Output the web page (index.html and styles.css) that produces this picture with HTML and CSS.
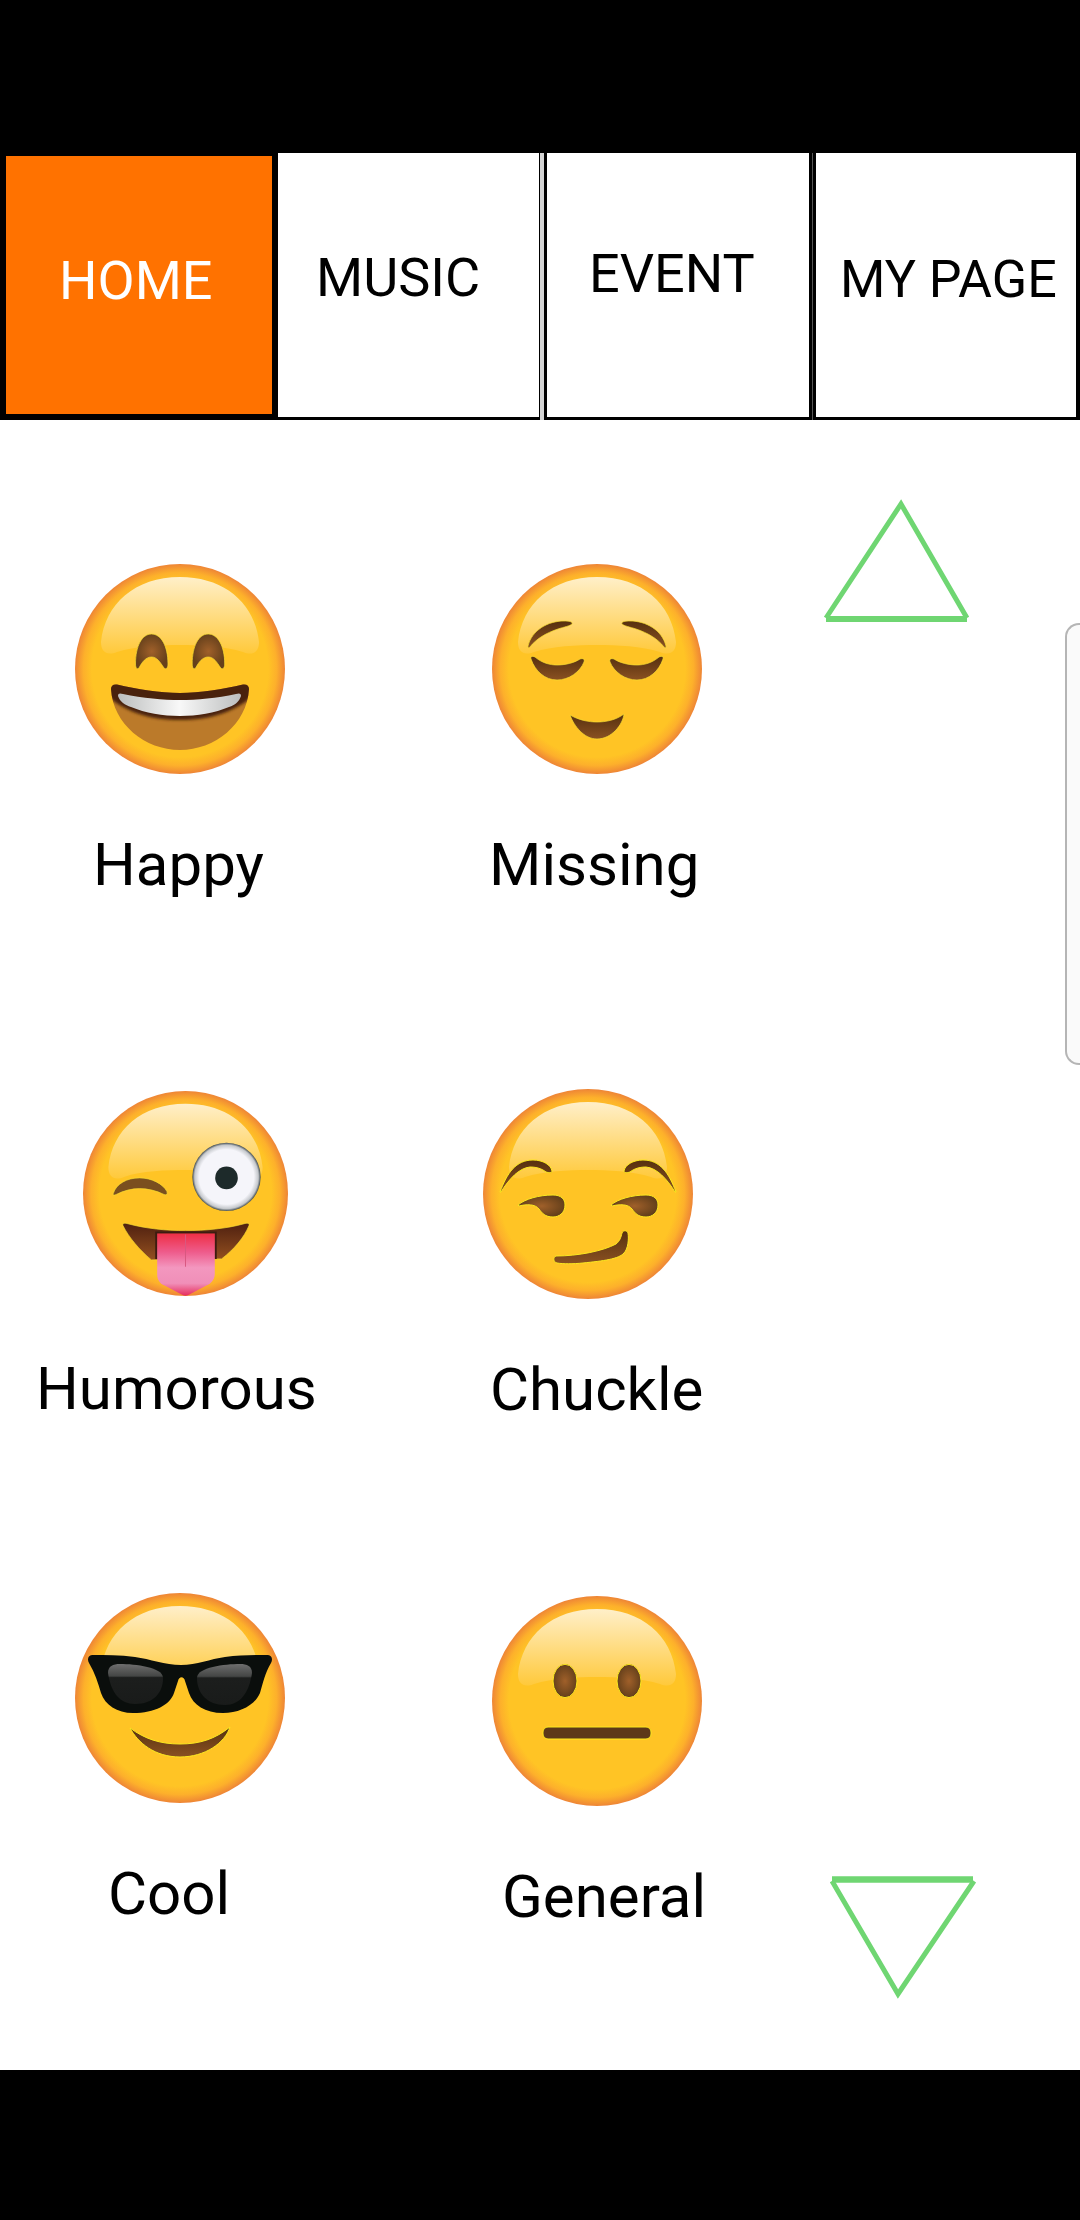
FILE: index.html
```html
<!DOCTYPE html>
<html lang="en">
<head>
    <meta charset="UTF-8">
    <title>Mood</title>
    <link rel="stylesheet" href="styles.css">
</head>
<body>
    <!-- shared face parts -->
    <svg class="defs" width="0" height="0" aria-hidden="true">
        <defs>
            <radialGradient id="skin" cx="50%" cy="50%" r="50%">
                <stop offset="0.84" stop-color="#ffc425"/>
                <stop offset="0.92" stop-color="#fdb02b"/>
                <stop offset="1" stop-color="#ee8536"/>
            </radialGradient>
            <linearGradient id="shine" gradientUnits="userSpaceOnUse" x1="0" y1="13" x2="0" y2="90">
                <stop offset="0" stop-color="#ffefc9"/>
                <stop offset="1" stop-color="#ffc93a"/>
            </linearGradient>
            <linearGradient id="brown" x1="0" y1="0" x2="0" y2="1">
                <stop offset="0" stop-color="#56300f"/>
                <stop offset="1" stop-color="#8a5122"/>
            </linearGradient>
            <radialGradient id="brownEye">
                <stop offset="0" stop-color="#a0602a"/>
                <stop offset="1" stop-color="#65401b"/>
            </radialGradient>
            <linearGradient id="teeth" x1="0" y1="0" x2="1" y2="0">
                <stop offset="0" stop-color="#bcbebe"/>
                <stop offset="0.5" stop-color="#f8f8f8"/>
                <stop offset="1" stop-color="#bcbebe"/>
            </linearGradient>
            <linearGradient id="laugh" x1="0" y1="0" x2="0" y2="1">
                <stop offset="0" stop-color="#4f2010"/>
                <stop offset="1" stop-color="#93501f"/>
            </linearGradient>
            <linearGradient id="tongue" x1="0" y1="0" x2="0" y2="1">
                <stop offset="0" stop-color="#ee2f45"/>
                <stop offset="0.3" stop-color="#ee5c8c"/>
                <stop offset="0.55" stop-color="#f397bf"/>
                <stop offset="0.8" stop-color="#f08fb8"/>
                <stop offset="1" stop-color="#e62c5c"/>
            </linearGradient>
            <radialGradient id="eyeball">
                <stop offset="0.8" stop-color="#f5f5fa"/>
                <stop offset="0.93" stop-color="#c5c8cc"/>
                <stop offset="1" stop-color="#3f4a50"/>
            </radialGradient>
            <linearGradient id="lens" x1="0" y1="0" x2="0" y2="1">
                <stop offset="0" stop-color="#6e6e6e"/>
                <stop offset="0.3" stop-color="#444645"/>
                <stop offset="0.34" stop-color="#1c1e1d"/>
                <stop offset="1" stop-color="#191b1a"/>
            </linearGradient>
            <filter id="soft" x="-10%" y="-10%" width="120%" height="120%">
                <feGaussianBlur stdDeviation="1.5"/>
            </filter>
            <clipPath id="happyMouth">
                <path d="M36 125C36 122 38 120 42 120.5C62 125 85 129 105 129C125 129 148 125 168 120.5C172 120 174 122 174 125C172 160 140 186 105 186C70 186 38 160 36 125Z"/>
            </clipPath>
            <g id="base">
                <circle cx="105" cy="105" r="105" fill="url(#skin)"/>
                <path fill="url(#shine)" d="M26 78C30 40 60 13 105 13C150 13 180 40 184 78C184 88 178 92 168 88C150 82 125 81 105 81C85 81 60 82 42 88C32 92 26 88 26 78Z"/>
            </g>
        </defs>
    </svg>

    <div class="top-bar"></div>

    <ul class="nav">
        <li class="tab tab-home">HOME</li>
        <li class="tab tab-music">MUSIC</li>
        <li class="divider divider-light"></li>
        <li class="tab tab-event">EVENT</li>
        <li class="divider divider-dark"></li>
        <li class="tab tab-page">MY PAGE</li>
    </ul>

    <div class="content">
        <div class="faces">
            <div class="row row-first">
                <div class="mood mood-happy">
                    <svg class="face" viewBox="0 0 210 210">
                        <use href="#base"/>
                        <path id="archEye" fill="url(#brownEye)" stroke="#f5dc30" stroke-width=".7" d="M60.5 100C60.5 82 67 70 76.5 70C86 70 93 82 93 100C93 104 91 106 89 104C85 98 82 93 76.5 93C71 93 67 98 64 104C62 106 60.5 104 60.5 100Z"/>
                        <use href="#archEye" x="56.7"/>
                        <path fill="#bb7a2a" d="M36 125C36 122 38 120 42 120.5C62 125 85 129 105 129C125 129 148 125 168 120.5C172 120 174 122 174 125C172 160 140 186 105 186C70 186 38 160 36 125Z"/>
                        <g clip-path="url(#happyMouth)">
                            <path fill="#4a2410" filter="url(#soft)" d="M30 115H180V130C164 145 140 156 105 156C70 156 46 145 30 130Z"/>
                        </g>
                        <path fill="url(#teeth)" d="M43 132C43 129 45 129 48 130C68 134 88 136 105 136C122 136 142 134 161 130C164 129 166 129 166 132C164 138 160 141 154 143C140 149 122 152 105 152C88 152 70 149 56 143C50 141 45 138 43 132Z"/>
                    </svg>
                    <div class="label">Happy</div>
                </div>
                <div class="mood mood-missing">
                    <svg class="face" viewBox="0 0 210 210">
                        <use href="#base"/>
                        <g id="calmSide" fill="url(#brown)" stroke="#f5dc30" stroke-width=".7">
                            <path d="M36 82C40 66 56 57 72 57C78 57 81 58 80 60C78 62 72 63 66 65C54 69 44 75 38 83C37 84 35.5 84 36 82Z"/>
                            <path d="M39 95C38 92 41 92 43 93C50 99 58 101 65 101C73 101 82 99 88 95C91 94 93 95 92 98C88 108 77 116 65 116C53 116 43 107 39 95Z"/>
                        </g>
                        <use href="#calmSide" transform="matrix(-1 0 0 1 210 0)"/>
                        <path fill="url(#brown)" stroke="#f5dc30" stroke-width=".7" d="M78 151C87 156 96 158 105 158C114 158 124 156 132 150C131 160 120 175 105 175C92 175 82 162 78 151Z"/>
                    </svg>
                    <div class="label">Missing</div>
                </div>
            </div>

            <div class="row row-second">
                <div class="mood mood-humorous">
                    <svg class="face" viewBox="0 0 210 210">
                        <use href="#base"/>
                        <path fill="#7a4f1f" stroke="#f5dc30" stroke-width=".7" d="M31 105C34 95 45 89 58 89C70 89 82 95 86 103C87 106 85 107 83 106C75 102 66 100 58 100C50 100 42 102 34 106C32 107 30.5 107 31 105Z"/>
                        <circle cx="147" cy="88" r="35" fill="url(#eyeball)"/>
                        <circle cx="147" cy="89" r="11.6" fill="#1d2a2a"/>
                        <path fill="url(#laugh)" stroke="#f5dc30" stroke-width=".7" d="M41 138C40 135 43 135 46 136C65 141 85 143 105 143C125 143 147 141 165 136C168 135 171 135 170 138C165 150 155 162 142 172L70 173C58 163 47 150 41 138Z"/>
                        <path stroke="#3d1c10" stroke-width="2" fill="none" d="M75 172V145H136V172"/>
                        <path fill="url(#tongue)" d="M76 146H135V187C135 192 133 195 129 198L108 209C106 210 104 210 102 209L81 198C77 195 76 192 76 187Z"/>
                        <path stroke="#d8577f" stroke-width="1" d="M105 147V180"/>
                    </svg>
                    <div class="label">Humorous</div>
                </div>
                <div class="mood mood-chuckle">
                    <svg class="face" viewBox="0 0 210 210">
                        <use href="#base"/>
                        <g fill="url(#brown)" stroke="#fbe81f" stroke-width="1">
                            <path d="M17 103C24 84 33 71 50 71C60 71 68 76 69 82C69 84 66 84 63 83C58 79 52 78 47 78C36 79 26 90 18 103Z"/>
                            <path d="M193 103C186 84 177 71 160 71C150 71 142 76 141 82C141 84 144 84 147 83C152 79 158 78 163 78C174 79 184 90 192 103Z"/>
                        </g>
                        <path id="sideEye" fill="url(#brownEye)" stroke="#fbe81f" stroke-width="1" d="M35 116C42 110 56 106 70 106C78 106 82 110 82 116C82 124 76 128 70 128C62 128 59 124 56 120C52 115 44 115 36 117Z"/>
                        <use href="#sideEye" x="93"/>
                        <path fill="url(#brown)" stroke="#fbe81f" stroke-width="1" d="M73 167C95 167 120 162 133 155C137 152 138 148 139 144C140 141 144 141 145 144C146 150 145 160 141 164C136 170 120 172 100 174C90 175 80 175 74 174C70 173 70 168 73 167Z"/>
                    </svg>
                    <div class="label">Chuckle</div>
                </div>
            </div>

            <div class="row row-third">
                <div class="mood mood-cool">
                    <svg class="face" viewBox="0 0 210 210">
                        <use href="#base"/>
                        <path id="shades" fill="#0a0e0c" d="M17 62C30 62 45 62 60 64C75 66 90 72 106 72C122 72 135 66 150 64C165 62 180 62 193 62C197 62 198 67 196 70C190 80 188 90 185 100C180 112 165 120 148 120C130 120 118 112 114 100L110 88C109 83 104 83 103 88L99 100C95 112 80 120 58 120C42 120 30 112 26 100C23 90 20 80 14 70C12 67 13 62 17 62Z"/>
                        <path fill="url(#lens)" d="M33 80C33 73 38 71 45 71C60 71 88 74 88 85C88 100 78 111 60 111C45 111 36 100 33 80Z"/>
                        <path fill="url(#lens)" d="M177 80C177 73 172 71 165 71C150 71 122 74 122 85C122 100 132 112 150 112C165 112 174 100 177 80Z"/>
                        <path fill="url(#brown)" stroke="#fbe81f" stroke-width="1" d="M55 135C70 146 85 151 105 151C125 151 140 146 155 134C150 150 130 164 105 164C80 164 63 150 55 135Z"/>
                    </svg>
                    <div class="label">Cool</div>
                </div>
                <div class="mood mood-general">
                    <svg class="face" viewBox="0 0 210 210">
                        <use href="#base"/>
                        <ellipse cx="73" cy="85" rx="12" ry="16.7" fill="url(#brownEye)" stroke="#fbe81f"/>
                        <ellipse cx="137" cy="85" rx="12" ry="16.7" fill="url(#brownEye)" stroke="#fbe81f"/>
                        <rect x="51" y="131" width="108" height="12" rx="5" fill="#5d3819" stroke="#fbe81f"/>
                    </svg>
                    <div class="label">General</div>
                </div>
            </div>
        </div>

        <div class="arrows">
            <svg class="arrow arrow-up" viewBox="0 0 155 128" fill="none" stroke="#6fd672">
                <path stroke-width="5" d="M6 120L81 6L147 120"/>
                <path stroke-width="6" d="M6 121H147"/>
            </svg>
            <svg class="arrow arrow-down" viewBox="0 0 155 130" fill="none" stroke="#6fd672">
                <path stroke-width="6.5" d="M7 7.5H148"/>
                <path stroke-width="5" d="M7 9L73 122L149 9"/>
            </svg>
        </div>
    </div>

    <div class="bottom-bar"></div>

    <div class="edge-handle"></div>
</body>
</html>
```

FILE: styles.css
```css
*{
    padding: 0;
    margin: 0;
    box-sizing: border-box;
}
li{
    list-style: none;
}
html,body{
    background: #fff;
}
body{
    width: 1080px;
    height: 2220px;
    position: relative;
    overflow: hidden;
    display: flex;
    flex-direction: column;
    font-family: Roboto, "Liberation Sans", sans-serif;
    color: #000;
}
.defs{
    display: block;
    width: 0;
    height: 0;
}
.top-bar{
    height: 153px;
    background: #000;
}
.bottom-bar{
    height: 150px;
    background: #000;
}

/* tabs */
.nav{
    height: 267px;
    display: flex;
    align-items: flex-start;
    background: #000;
}
.tab{
    height: 264px;
    background: #fff;
    font-size: 54px;
    line-height: 60px;
    white-space: nowrap;
}
.tab-home{
    width: 266px;
    height: 258px;
    margin-left: 6px;
    margin-top: 3px;
    padding-left: 53px;
    padding-top: 95px;
    background: #ff7200;
    color: #fff;
}
.tab-music{
    width: 261px;
    margin-left: 6px;
    padding-left: 38px;
    padding-top: 95px;
}
.tab-event{
    width: 262px;
    margin-left: 3px;
    padding-left: 42px;
    padding-top: 91px;
}
.tab-page{
    width: 260px;
    margin-left: 3px;
    padding-left: 24px;
    padding-top: 97px;
    font-size: 52px;
}
.divider{
    width: 4px;
    height: 267px;
    margin-left: 1px;
}
.divider-light{
    background: #d4d4d4;
}
.divider-dark{
    width: 1px;
    margin-left: 3px;
    background: #555;
}

/* faces */
.content{
    flex: 1;
    display: flex;
}
.faces{
    width: 780px;
}
.row{
    display: flex;
}
.row-first{
    margin-top: 144px;
}
.row-second{
    margin-top: 189px;
}
.row-third{
    margin-top: 168px;
}
.mood{
    width: 420px;
}
.mood:last-child{
    width: 360px;
}
.face{
    display: block;
    width: 210px;
    height: 210px;
}
.label{
    margin-top: 56px;
    font-size: 60px;
    line-height: 70px;
    white-space: nowrap;
}
.mood-happy .face{
    margin-left: 75px;
}
.mood-happy .label{
    margin-left: 93px;
}
.mood-missing .face{
    margin-left: 72px;
}
.mood-missing .label{
    margin-left: 69px;
}
.mood-humorous .face{
    width: 205px;
    height: 205px;
    margin-left: 83px;
    margin-top: 2px;
}
.mood-humorous .label{
    margin-top: 58px;
    margin-left: 36px;
}
.mood-chuckle .face{
    margin-left: 63px;
}
.mood-chuckle .label{
    margin-left: 70px;
}
.mood-cool .face{
    margin-left: 75px;
}
.mood-cool .label{
    margin-left: 108px;
}
.mood-general .face{
    margin-left: 72px;
    margin-top: 3px;
}
.mood-general .label{
    margin-left: 82px;
}

/* up and down */
.arrows{
    flex: 1;
    display: flex;
    flex-direction: column;
    justify-content: space-between;
    padding-top: 78px;
    padding-bottom: 68px;
}
.arrow{
    display: block;
    width: 155px;
}
.arrow-up{
    height: 128px;
    margin-left: 40px;
}
.arrow-down{
    height: 130px;
    margin-left: 45px;
}

/* system edge panel, lies over the page */
.edge-handle{
    position: absolute;
    right: 0;
    top: 623px;
    width: 15px;
    height: 442px;
    background: #fafafa;
    border: 2px solid #b5b5b5;
    border-right: 0;
    border-radius: 14px 0 0 14px;
}
```
